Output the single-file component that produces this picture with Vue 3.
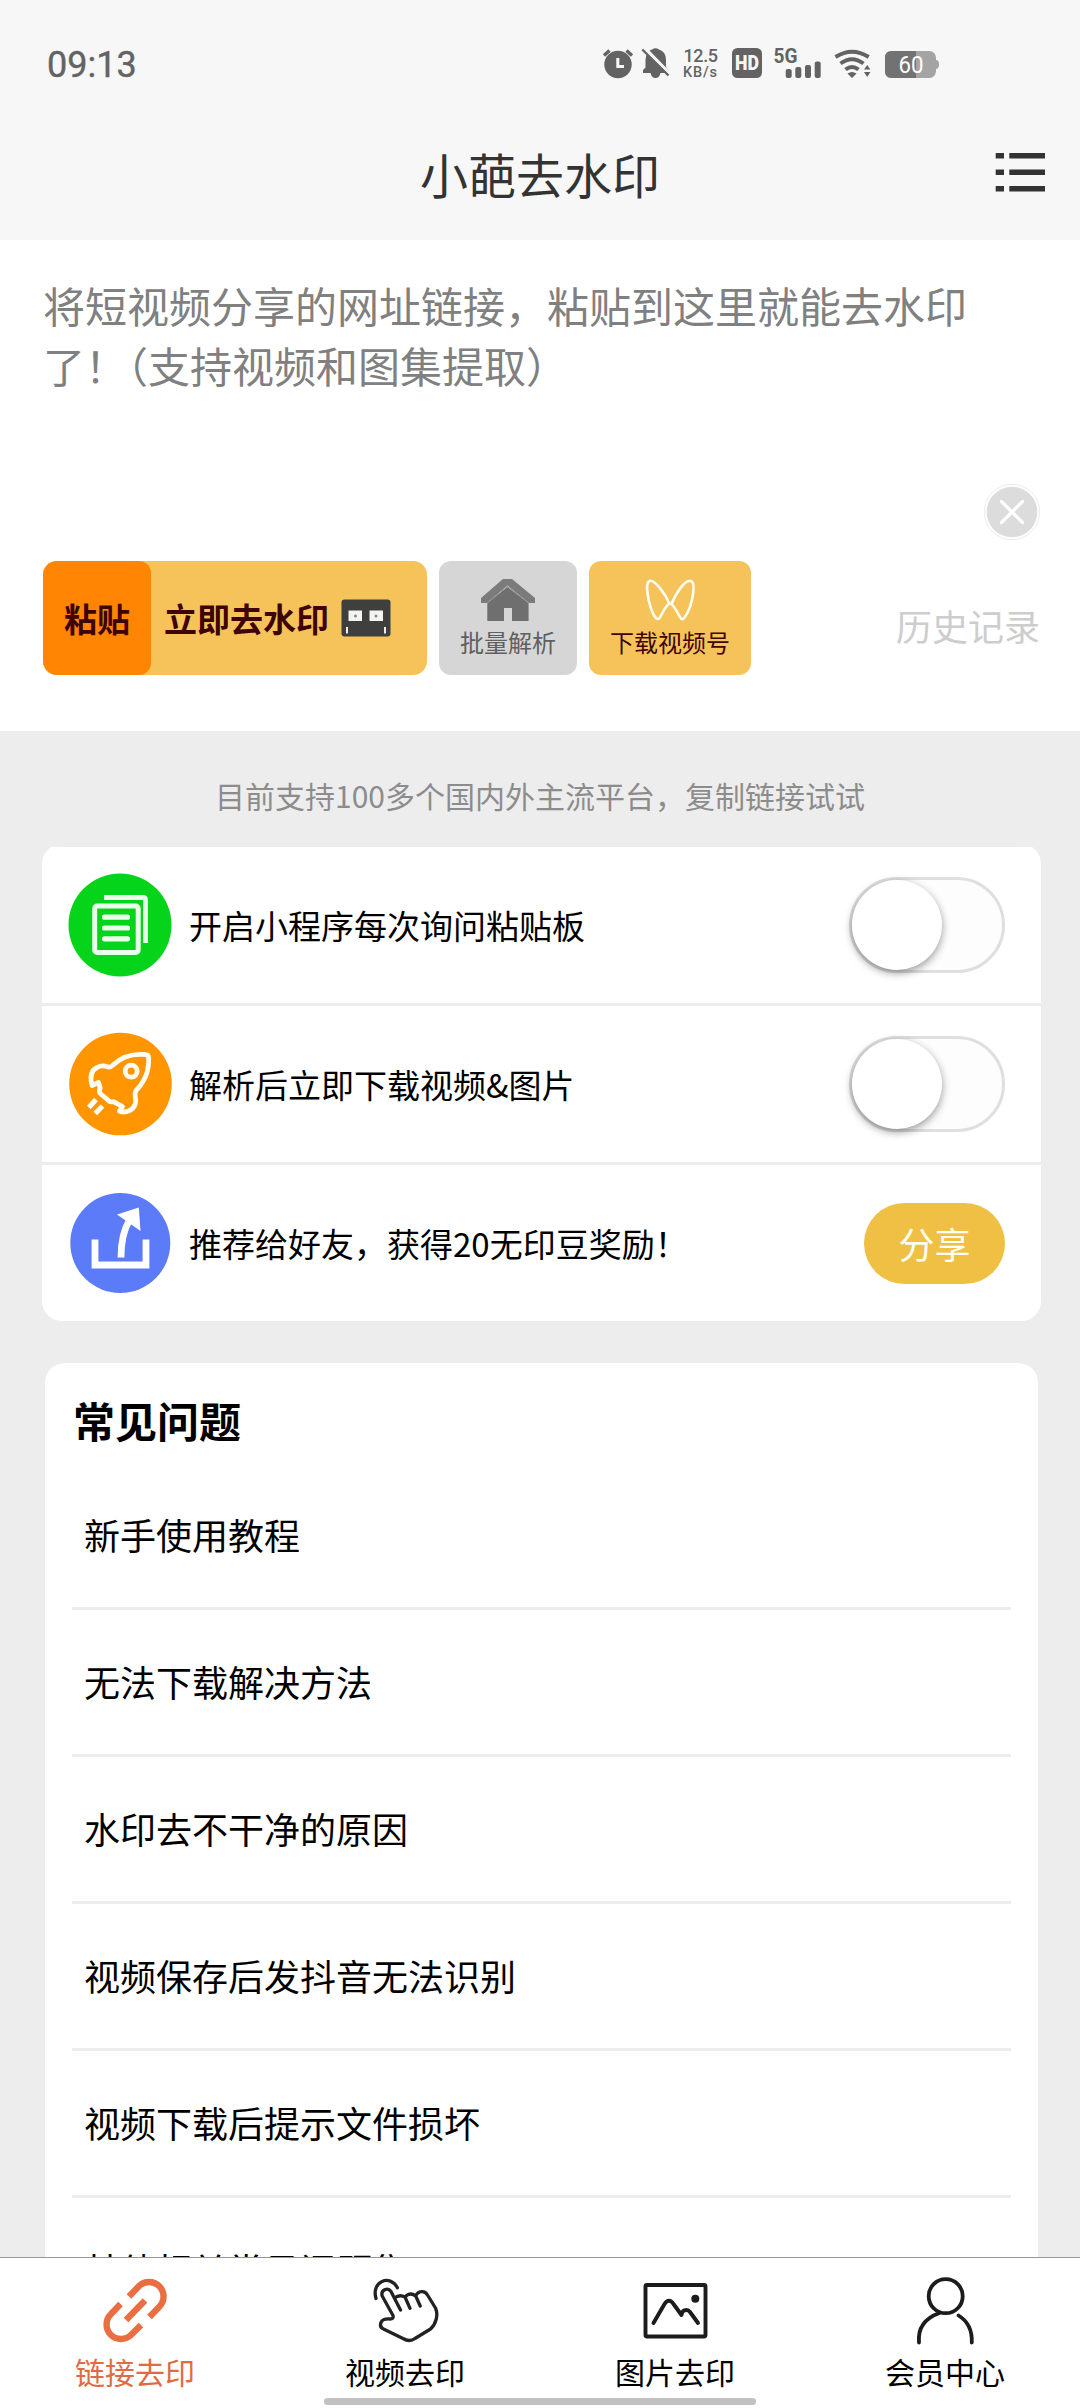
<script setup>
import { ref } from 'vue'

const askClipboard = ref(false)
const autoDownload = ref(false)
const questions = [
  '新手使用教程',
  '无法下载解决方法',
  '水印去不干净的原因',
  '视频保存后发抖音无法识别',
  '视频下载后提示文件损坏',
  '其他相关常见问题集',
]
</script>

<template>
  <div class="page">
    <header class="header">
      <div class="status">
        <span class="time">09:13</span>
        <svg class="status-icons" viewBox="600 44 345 40" width="345" height="40">
          <g fill="#636363">
            <circle cx="618" cy="64.500" r="13.700" />
            <path d="M604 55.500L609.500 50.500M632 55.500L626.500 50.500" stroke="#636363" stroke-width="3.400" />
            <path d="M617.800 58V66.500H624" fill="none" stroke="#f7f7f7" stroke-width="3" />
            <path d="M643 73V70L645.500 67.500V60Q646 51 652 49.500Q655.500 47 659 49.500Q666 51.500 666 60V67L668.500 70.500V73H660.500Q659.500 78 655.500 78Q651.500 78 650.500 73Z" />
            <path d="M643.500 47.500L670.500 75" stroke="#f7f7f7" stroke-width="4" />
            <path d="M642.300 49.500L668.500 75.500" stroke="#636363" stroke-width="2.400" />
            <text x="683.500" y="62" font-size="18" font-weight="500" textLength="34.500">12.5</text>
            <text x="683" y="77" font-size="14.500" font-weight="500" textLength="34">KB/s</text>
            <rect x="732" y="48" width="30" height="30" rx="5.500" />
            <text x="735" y="70" font-size="19.500" font-weight="900" textLength="24" lengthAdjust="spacingAndGlyphs" fill="#f7f7f7">HD</text>
            <text x="773.500" y="63" font-size="20.500" font-weight="700" textLength="24" lengthAdjust="spacingAndGlyphs">5G</text>
            <rect x="785.700" y="69" width="6" height="9" rx="2" />
            <rect x="795.300" y="67" width="6" height="11" rx="2" />
            <rect x="805" y="65" width="6" height="13" rx="2" />
            <rect x="814.700" y="61.500" width="6" height="16.500" rx="2" />
            <g fill="none" stroke="#636363" stroke-width="4">
              <path d="M835.500 57Q852 46.500 868.700 57" />
              <path d="M840.500 63.500Q852 55 863.500 63.500" />
              <path d="M845.500 69.500Q852 64.500 858.500 69.500" />
            </g>
            <path d="M847.500 73.500Q852 70.500 856.500 73.500L852 78ZM864 69.500L867.200 65L870.400 69.500ZM864 72L867.200 77L870.400 72Z" />
            <rect x="885" y="51" width="51" height="27" rx="6.500" fill="#a4a4a4" />
            <path d="M936 60Q939 60 939 64.500Q939 69 936 69Z" fill="#a4a4a4" />
            <path d="M916 51H891.500Q885 51 885 57.500V71.500Q885 78 891.500 78H916Z" fill="#727272" />
            <text x="898.500" y="72.700" font-size="23.500" font-weight="400" textLength="25" lengthAdjust="spacingAndGlyphs" fill="#fff">60</text>
          </g>
        </svg>
      </div>
      <div class="titlebar">
        <h1>小葩去水印</h1>
        <svg class="menu" viewBox="995 150 51 44" width="51" height="44">
          <path d="M995.700 155.800H1004M1009.300 155.800H1045M995.700 172.300H1004M1009.300 172.300H1045M995.700 188.800H1004M1009.300 188.800H1045" stroke="#333" stroke-width="5.600" />
        </svg>
      </div>
    </header>

    <section class="parser">
      <p class="hint">将短视频分享的网址链接，粘贴到这里就能去水印了！<span class="trim">（支持视频和图集提取）</span></p>
      <svg class="clear" viewBox="0 0 58 58" width="58" height="58">
        <circle cx="29" cy="29" r="27.700" fill="#fff" stroke="#ececec" stroke-width="1" />
        <circle cx="29" cy="29" r="25.300" fill="#dcdcdc" />
        <path d="M18.500 18.500L39.500 39.500M39.500 18.500L18.500 39.500" stroke="#fff" stroke-width="3.200" stroke-linecap="round" />
      </svg>
      <div class="actions">
        <div class="main-action">
          <button class="paste">粘贴</button>
          <span>立即去水印</span>
          <svg viewBox="0 0 50 38" width="50" height="38">
            <rect x=".5" y=".5" width="49" height="37" rx="3" fill="#3f403d" />
            <path d="M7.500 11.500H21V22H7.500ZM28.500 11.500H42V22H28.500Z" fill="#f4f4f4" />
            <circle cx="14.500" cy="17" r="1.500" fill="#888" />
            <circle cx="35" cy="17" r="1.500" fill="#888" />
            <path d="M6 28V34.500M44 28V34.500" stroke="#eee" stroke-width="2" />
          </svg>
        </div>
        <div class="tile batch">
          <svg viewBox="481 578 54 44" width="54" height="44">
            <path d="M503 579H512L535 598V603H529L507.500 585.500L487 603H481V598Z" fill="#7b7b7b" />
            <path d="M487.300 621V603L507.500 587L528.600 603V621H512V608H504V621Z" fill="#6f6f6f" />
            <path d="M487 603L507.500 586.500L529 603" fill="none" stroke="#959595" stroke-width="1" />
          </svg>
          <span>批量解析</span>
        </div>
        <div class="tile channel">
          <svg viewBox="643 578 54 44" width="54" height="44" fill="none" stroke="#fffdf0" stroke-width="2.600" stroke-linejoin="round">
            <path d="M669.500 604C665 593 655 580.500 650.500 580.700C646.500 581 646.800 588 647.500 593C648.500 602 652 614 656 618Q658.500 620.500 660.500 616.500Q664 609 668.300 604H671.700Q676 609 680 617Q682 621 684.500 617.500C690 610 692.500 599 693.300 592C693.800 586 693.700 581 690 580.700C685 580.500 677 591 671.500 604" />
          </svg>
          <span>下载视频号</span>
        </div>
        <span class="history">历史记录</span>
      </div>
    </section>

    <main class="content">
      <p class="support">目前支持100多个国内外主流平台，复制链接试试</p>

      <section class="options">
        <div class="option">
          <svg viewBox="68 873 104 104" width="104" height="104" fill="none" stroke="#e9ffe9">
            <circle cx="120" cy="925" r="51.500" fill="#05d41b" stroke="none" />
            <path d="M104 897.500H143Q145.500 897.500 145.500 900V943" stroke-width="4.800" />
            <rect x="94.700" y="906" width="43.500" height="46.500" rx="2.500" stroke-width="5" />
            <path d="M104.500 917.200H127.500M104.500 928H127.500M104.500 938.800H127.500" stroke-width="5.200" stroke-linecap="round" />
          </svg>
          <span class="label">开启小程序每次询问粘贴板</span>
          <button class="switch" role="switch" :aria-checked="askClipboard" @click="askClipboard = !askClipboard"><i /></button>
        </div>
        <div class="option">
          <svg viewBox="68 1032.500 104 104" width="104" height="104" fill="none" stroke="#fffcf2" stroke-width="4.800" stroke-linejoin="round">
            <circle cx="120.500" cy="1084.500" r="51.300" fill="#ff9500" stroke="none" />
            <path d="M145.500 1055Q148.500 1055 148.700 1059Q149 1072 143.500 1081Q141 1086 136.500 1090.500Q134.500 1093 135.200 1096.500Q137.500 1107.500 129 1111.300Q124 1113.500 119.500 1111.700L122.500 1107.200L113.500 1102.200Q110 1103 108.500 1101L100.200 1094Q98.500 1091.500 100.200 1088.500L98.500 1083L92 1086Q88.500 1072 97 1068Q102 1065 108 1067.500Q110.500 1068.300 113 1065.500Q125 1053.500 145.500 1055Z" />
            <circle cx="131.200" cy="1071.700" r="6" />
            <path d="M96 1100L88.800 1108M102.500 1106.500L95.300 1114" stroke-width="5" />
          </svg>
          <span class="label">解析后立即下载视频&amp;图片</span>
          <button class="switch" role="switch" :aria-checked="autoDownload" @click="autoDownload = !autoDownload"><i /></button>
        </div>
        <div class="option">
          <svg viewBox="68 1191 104 104" width="104" height="104" fill="none" stroke="#fff">
            <circle cx="120.300" cy="1243" r="50" fill="#5b7bf8" stroke="none" />
            <path d="M95 1239.500V1265H146V1239.500" stroke-width="6.800" />
            <path d="M121 1257.500Q121 1234 129.500 1220" stroke-width="6.800" />
            <path d="M138.800 1207.500L117 1214.500L140.500 1231Z" fill="#fff" stroke="none" />
          </svg>
          <span class="label">推荐给好友，获得20无印豆奖励！</span>
          <button class="share">分享</button>
        </div>
      </section>

      <section class="faq">
        <h2>常见问题</h2>
        <ul>
          <li v-for="q in questions" :key="q">{{ q }}</li>
        </ul>
      </section>
    </main>

    <nav class="tabs">
      <a class="tab active">
        <svg viewBox="100 2276 70 70" width="70" height="70" fill="none" stroke="#e96e42" stroke-width="6.400">
          <path d="M129 2296.500L138.800 2286.300A14.200 14.200 0 0 1 159.300 2306.800L149.500 2317M141 2325L131.200 2334.800A14.200 14.200 0 0 1 110.800 2314.300L120.500 2304M126 2320L145 2300.500" />
        </svg>
        <span>链接去印</span>
      </a>
      <a class="tab">
        <svg viewBox="370 2276 70 70" width="70" height="70" fill="none" stroke="#222" stroke-width="3.300" stroke-linejoin="round" stroke-linecap="round">
          <path d="M376 2298.500C371 2281 390 2274 397.400 2287.700" />
          <path d="M400.500 2310L391 2291.500C387.500 2286.500 380.500 2290.500 382.200 2296L393 2315.500Q394 2319 390 2319Q383 2318.500 381.200 2322Q379 2327 383.500 2329L403 2338.500Q409.500 2342.500 415 2338.500L430.500 2329C436 2324 438.500 2315 435.500 2308L427.500 2295C425 2290 418 2290.500 415.700 2296Q410 2291.500 405 2297Q399.500 2294 394.500 2298M405 2297L410 2308.300M415.700 2296L420.200 2306" />
        </svg>
        <span>视频去印</span>
      </a>
      <a class="tab">
        <svg viewBox="640 2276 70 70" width="70" height="70" fill="none" stroke="#1c1c1c" stroke-width="3.900" stroke-linejoin="round" stroke-linecap="round">
          <rect x="645.500" y="2285" width="60" height="51.500" rx="1.500" />
          <path d="M653.500 2323L664.500 2304Q669 2297.500 673.500 2304L681.500 2315Q682 2310 686.500 2310Q688.500 2310 690 2312L698 2323" />
          <circle cx="695.300" cy="2298.700" r="4" fill="#1c1c1c" stroke="none" />
        </svg>
        <span>图片去印</span>
      </a>
      <a class="tab">
        <svg viewBox="910 2276 70 70" width="70" height="70" fill="none" stroke="#1c1c1c" stroke-width="3.800" stroke-linecap="round">
          <circle cx="945.700" cy="2296.200" r="17" />
          <path d="M939.500 2313Q917 2321 919 2342.500M958.500 2315.500Q972.500 2324 971.800 2342.500" />
        </svg>
        <span>会员中心</span>
      </a>
      <i class="home-indicator" />
    </nav>
  </div>
</template>

<style>
body {
  margin: 0;
}
</style>

<style scoped>
.page {
  width: 1080px;
  height: 2408px;
  overflow: hidden;
  display: flex;
  flex-direction: column;
  background: #ededed;
  color: #000;
  font-family: "Noto Sans CJK SC", sans-serif;
}
h1, h2, p, ul {
  margin: 0;
  padding: 0;
  font-weight: 400;
}
button {
  border: 0;
  padding: 0;
  font: inherit;
}
svg {
  display: block;
  flex: none;
}
.header {
  flex: none;
  height: 240px;
  background: #f7f7f7;
  box-sizing: border-box;
  padding-top: 44px;
}
.status {
  display: flex;
  justify-content: space-between;
  height: 40px;
  padding: 0 135px 0 47px;
  font-family: Roboto, sans-serif;
}
.time {
  font-size: 36px;
  line-height: 42px;
  font-weight: 400;
  color: #636363;
  -webkit-text-stroke: 0.4px #636363;
}
.titlebar {
  display: grid;
  grid-template-columns: 1fr auto 1fr;
  align-items: center;
  height: 100px;
  margin-top: 38px;
}
.titlebar h1 {
  grid-column: 2;
  font-size: 48px;
  line-height: 100px;
  margin-top: 1px;
  color: #333;
}
.menu {
  justify-self: end;
  margin: 0 34px 2px 0;
}
.parser {
  flex: none;
  height: 491px;
  box-sizing: border-box;
  padding: 35px 40px 0 43px;
  background: #fff;
}
.hint {
  width: 940px;
  height: 120px;
  font-size: 42px;
  line-height: 60px;
  color: #808080;
}
.trim {
  margin-left: -0.5em;
}
.clear {
  margin: 88px 0 0 940px;
}
.actions {
  display: flex;
  align-items: center;
  height: 114px;
  margin-top: 20px;
}
.main-action {
  display: flex;
  align-items: center;
  width: 384px;
  height: 114px;
  border-radius: 14px;
  background: #f5c35a;
  color: #3f0303;
  font-size: 33px;
  font-weight: 700;
}
.paste {
  width: 108px;
  height: 114px;
  margin-right: 13px;
  border-radius: 14px 12px 12px 14px;
  background: #ff8503;
  color: inherit;
}
.main-action svg {
  margin-left: 12px;
}
.tile {
  display: flex;
  flex-direction: column;
  align-items: center;
  box-sizing: border-box;
  height: 114px;
  padding-top: 17px;
  border-radius: 12px;
  font-size: 24px;
  line-height: 36px;
}
.batch {
  width: 138px;
  margin-left: 12px;
  background: #d6d6d6;
  color: #5f5f5f;
}
.channel {
  width: 162px;
  margin-left: 12px;
  background: #f5c35a;
  color: #3f0303;
}
.tile span {
  margin-top: 2px;
}
.history {
  margin: 13px 0 0 auto;
  font-size: 36px;
  color: #cdcdcd;
}
.content {
  flex: 1;
  min-height: 0;
  overflow: hidden;
}
.support {
  height: 113px;
  line-height: 129px;
  text-align: center;
  font-size: 30px;
  color: #8c8c8c;
}
.options {
  margin: 0 39px 0 42px;
  border-radius: 20px;
  overflow: hidden;
  background: #fff;
}
.option {
  display: flex;
  align-items: center;
  box-sizing: border-box;
  height: 159px;
  padding: 0 36px 0 26px;
  border-top: 3px solid #ededed;
}
.label {
  margin-left: 17px;
  font-size: 33px;
}
.switch {
  display: block;
  box-sizing: border-box;
  width: 156px;
  height: 96px;
  margin-left: auto;
  border: 3px solid #dfdfdf;
  border-radius: 48px;
  background: #fdfdfd;
}
.switch i {
  display: block;
  width: 90px;
  height: 90px;
  border-radius: 50%;
  background: #fff;
  box-shadow: 0 3px 9px rgba(0, 0, 0, 0.4);
}
.switch[aria-checked="true"] i {
  margin-left: auto;
}
.share {
  width: 141px;
  height: 81px;
  margin-left: auto;
  border-radius: 41px;
  background: #f0c045;
  color: #fffef2;
  font-size: 36px;
  line-height: 79px;
}
.faq {
  margin: 42px 42px 0 45px;
  padding: 24px 27px 0;
  border-radius: 20px;
  background: #fff;
}
.faq h2 {
  height: 76px;
  padding-left: 1px;
  font-size: 42px;
  font-weight: 700;
  line-height: 66px;
}
.faq ul {
  list-style: none;
}
.faq li {
  box-sizing: border-box;
  height: 147px;
  padding-left: 12px;
  border-bottom: 3px solid #ededed;
  font-size: 36px;
  line-height: 142px;
}
.tabs {
  position: relative;
  flex: none;
  display: flex;
  box-sizing: border-box;
  height: 151px;
  border-top: 1px solid #979797;
  background: #fff;
}
.tab {
  flex: 1;
  display: flex;
  flex-direction: column;
  align-items: center;
  padding-top: 18px;
  font-size: 30px;
  line-height: 44px;
}
.tab span {
  margin-top: 3px;
}
.tab.active {
  color: #df6b42;
}
.home-indicator {
  position: absolute;
  left: 324px;
  bottom: 3px;
  width: 432px;
  height: 7px;
  border-radius: 4px;
  background: #c1c1c1;
}
</style>
